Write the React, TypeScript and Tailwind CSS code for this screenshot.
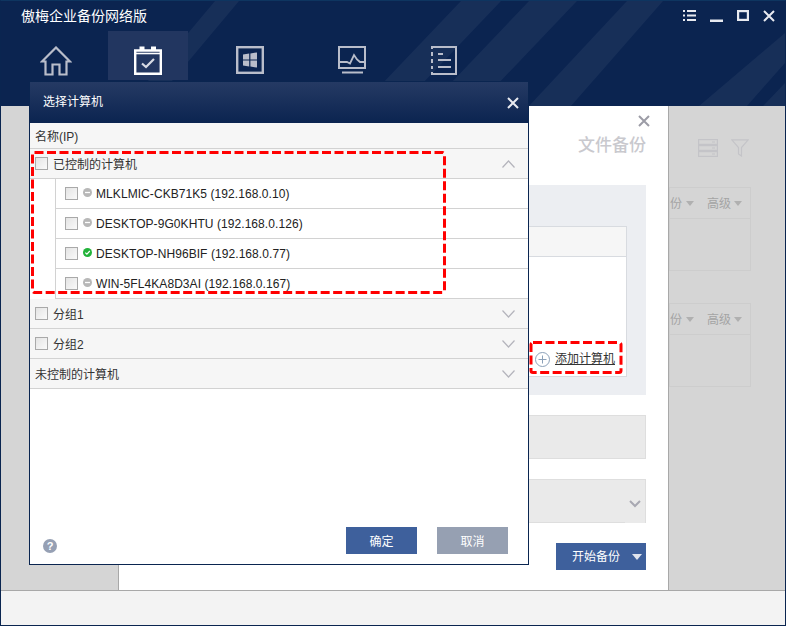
import React from 'react';

const navItems = ['home', 'backup', 'windows', 'monitor', 'notes'];

const computers = [
  { name: 'MLKLMIC-CKB71K5 (192.168.0.10)', online: false },
  { name: 'DESKTOP-9G0KHTU (192.168.0.126)', online: false },
  { name: 'DESKTOP-NH96BIF (192.168.0.77)', online: true },
  { name: 'WIN-5FL4KA8D3AI (192.168.0.167)', online: false },
];

function NavIcon({ name }: { name: string }) {
  if (name === 'home') {
    return (
      <svg width="32" height="30" viewBox="0 0 32 30" fill="none" stroke="#b9bdca" strokeWidth="2.2">
        <path d="M5.5 15.5H2L16 1.5L30 15.5H26.5V28.5H19.5V18.5H12.5V28.5H5.5Z" />
      </svg>
    );
  }
  if (name === 'backup') {
    return (
      <svg width="28" height="30" viewBox="0 0 28 30" fill="none">
        <path d="M1.2 4.5H26.8V27.8H1.2Z" stroke="#fff" strokeWidth="2.4" />
        <path d="M1 7.5H27" stroke="#fff" strokeWidth="1.6" />
        <path d="M5.5 0.5H10.5V4H5.5ZM17 0.5H22V4H17Z" fill="#fff" />
        <path d="M8 17.5L12 21L20 13" stroke="#d8dbe4" strokeWidth="2.2" />
      </svg>
    );
  }
  if (name === 'windows') {
    return (
      <svg width="28" height="28" viewBox="0 0 28 28" fill="none">
        <rect x="1.2" y="1.2" width="25.6" height="25.6" stroke="#b9bdca" strokeWidth="2.4" />
        <path d="M7 8.5L13.2 7.6V13.4H7ZM14.4 7.4L21 6.4V13.4H14.4ZM7 14.6H13.2V20.4L7 19.5ZM14.4 14.6H21V21.6L14.4 20.6Z" fill="#b9bdca" />
      </svg>
    );
  }
  if (name === 'monitor') {
    return (
      <svg width="28" height="28" viewBox="0 0 28 28" fill="none" stroke="#b9bdca">
        <rect x="1" y="1" width="26" height="21" strokeWidth="2" />
        <path d="M1 16H9L12 17.5L16 9L19 13.5L22 16H27" strokeWidth="1.8" />
        <path d="M4 26.5H25" strokeWidth="2" />
      </svg>
    );
  }
  return (
    <svg width="26" height="29" viewBox="0 0 26 29" fill="none" stroke="#b9bdca" strokeWidth="2">
      <path d="M1 3V1H25V28H1V26" />
      <path d="M1 6V10M1 13V17M1 20V23" />
      <path d="M7 8H12M7 14H20M7 21H20" />
    </svg>
  );
}

function CheckBox() {
  return <span className="block w-[13px] h-[13px] shrink-0 border border-[#a9a9a9] bg-gradient-to-br from-[#e4e4e4] to-[#fafafa]" />;
}

function Chevron({ up }: { up?: boolean }) {
  return (
    <svg width="13" height="8" viewBox="0 0 13 8" fill="none" stroke="#b4b4bc" strokeWidth="1.2" className="shrink-0">
      <path d={up ? 'M0.5 7.5L6.5 1L12.5 7.5' : 'M0.5 0.5L6.5 7L12.5 0.5'} />
    </svg>
  );
}

function GroupRow({ label, checkbox = true, up }: { label: string; checkbox?: boolean; up?: boolean }) {
  return (
    <div className="h-[30px] flex items-center border-b border-[#d2d2d2] bg-[#f6f6f6] pl-[5px] pr-[13px]">
      {checkbox && <CheckBox />}
      <span className={checkbox ? 'ml-[5px] pt-[2px] flex-1' : 'pt-[2px] flex-1'}>{label}</span>
      <Chevron up={up} />
    </div>
  );
}

function StatusDot({ online }: { online: boolean }) {
  if (online) {
    return (
      <svg width="9" height="9" viewBox="0 0 9 9" className="mb-[3px] ml-[5px] shrink-0">
        <circle cx="4.5" cy="4.5" r="4.5" fill="#22b33a" />
        <path d="M2.3 4.6L3.9 6.1L6.8 3" fill="none" stroke="#fff" strokeWidth="1.2" />
      </svg>
    );
  }
  return (
    <svg width="9" height="9" viewBox="0 0 9 9" className="mb-[3px] ml-[5px] shrink-0">
      <circle cx="4.5" cy="4.5" r="4.5" fill="#b8b8b8" />
      <path d="M2 4.5H7" stroke="#fff" strokeWidth="1.3" />
    </svg>
  );
}

function SideCard() {
  return (
    <div className="h-[84px] mr-[34px] border border-[#cdcdcd] overflow-hidden">
      <div className="h-[31px] border-b border-[#cdcdcd] flex items-center justify-end pt-[1px] pr-[8px] text-[12px] text-[#a4a4a4] whitespace-nowrap">
        <span className="shrink-0">份</span>
        <span className="shrink-0 ml-[4px] mr-[13px] w-0 h-0 border-x-[4px] border-x-transparent border-t-[5px] border-t-[#b0b0b0]" />
        <span className="shrink-0">高级</span>
        <span className="shrink-0 ml-[3px] w-0 h-0 border-x-[4px] border-x-transparent border-t-[5px] border-t-[#b0b0b0]" />
      </div>
    </div>
  );
}

export default function App() {
  return (
    <div className="relative w-[786px] h-[626px] flex flex-col overflow-hidden border border-[#0a2550] border-t-[#0e3560] text-[12px] text-[#333] font-['Liberation_Sans','Noto_Sans_CJK_SC',sans-serif]">
      <header className="relative h-[105px] shrink-0 bg-[#0b2450]">
        <svg className="absolute inset-0" width="784" height="105" viewBox="0 0 784 105">
          <g fill="#fff" fillOpacity="0.05">
            <polygon points="214,0 238,0 150,105 126,105" />
            <polygon points="460,0 500,0 400,105 360,105" />
            <polygon points="528,0 576,0 476,105 428,105" />
            <polygon points="626,0 662,0 570,105 528,105" />
            <polygon points="784,32 784,62 746,105 698,105" />
            <polygon points="784,82 784,105 762,105" />
          </g>
        </svg>
        <div className="relative pl-[20px] pt-[5px] h-[30px] text-[14px] leading-[20px] text-white">傲梅企业备份网络版</div>
        <div className="absolute right-[10px] top-[9px] flex items-start gap-[14px]">
          <svg width="13" height="11" viewBox="0 0 13 11" fill="#e8eaf0">
            <path d="M0 0H2V2H0ZM4 0H13V2H4ZM0 4.5H2V6.5H0ZM4 4.5H13V6.5H4ZM0 9H2V11H0ZM4 9H13V11H4Z" />
          </svg>
          <svg width="13" height="12" viewBox="0 0 13 12" fill="#e8eaf0">
            <path d="M0 9.5H13V12H0Z" />
          </svg>
          <svg width="12" height="11" viewBox="0 0 12 11" fill="none" stroke="#e8eaf0" strokeWidth="2.2">
            <rect x="1.1" y="1.1" width="9.8" height="8.8" />
          </svg>
          <svg width="12" height="12" viewBox="0 0 12 12" fill="none" stroke="#e8eaf0" strokeWidth="2">
            <path d="M1 1L11 11M11 1L1 11" />
          </svg>
        </div>
        <nav className="relative flex pl-[15px]">
          {navItems.map((item, i) => (
            <div
              key={item}
              className={
                'w-[80px] h-[49px] flex justify-center pt-[15px] ' +
                (item === 'backup' ? 'bg-[#223660] ml-[12px]' : i === 4 ? 'ml-[12px]' : i === 0 ? '' : 'ml-[22px]')
              }
            >
              <NavIcon name={item} />
            </div>
          ))}
        </nav>
      </header>

      <div className="flex-1 flex min-h-0">
        <div className="w-[118px] shrink-0 bg-[#d5d5d5] border-r border-[#a8a8a8]" />

        <main className="flex-1 flex flex-col bg-white pl-[22px] pr-[22px] pt-[9px]">
          <div className="flex justify-end -mr-[4px]">
            <svg width="12" height="12" viewBox="0 0 12 12" fill="none" stroke="#9c9ca6" strokeWidth="2">
              <path d="M1 1L11 11M11 1L1 11" />
            </svg>
          </div>
          <div className="mt-[7px] h-[24px] text-right text-[17px] leading-[24px] font-medium text-[#c9c9ce]">文件备份</div>
          <div className="mt-[27px] h-[210px] shrink-0 bg-[#eceef2] pt-[41px] pr-[19px]">
            <div className="h-[151px] ml-[60px] flex flex-col bg-white border border-[#d8dbe0]">
              <div className="h-[30px] shrink-0 bg-[#f6f6f6] border-b border-[#d8dbe0]" />
              <div className="flex-1 flex items-end justify-end pr-[11px] pb-[9px] gap-[5px]">
                <svg width="15" height="15" viewBox="0 0 15 15" fill="none" stroke="#8ba0b8" strokeWidth="1">
                  <circle cx="7.5" cy="7.5" r="7" />
                  <path d="M7.5 3.5V11.5M3.5 7.5H11.5" />
                </svg>
                <span className="underline leading-[16px]">添加计算机</span>
              </div>
            </div>
          </div>
          <div className="mt-[20px] h-[44px] shrink-0 bg-[#eaeaea] border border-[#dedede]" />
          <div className="relative mt-[20px] h-[44px] shrink-0 bg-[#eaeaea] border-x border-t border-[#dedede] flex items-center justify-end pr-[4px]">
            <svg width="12" height="8" viewBox="0 0 12 8" fill="none" stroke="#a8a8b2" strokeWidth="2" className="mt-[4px]">
              <path d="M1 1L6 6L11 1" />
            </svg>
            <div className="absolute left-0 bottom-0 right-[20px] h-px bg-[#dedede]" />
          </div>
          <div className="mt-[20px] flex justify-end">
            <div className="w-[90px] h-[27px] bg-[#3e609c] text-white flex items-center pl-[16px]">
              <span className="flex-1">开始备份</span>
              <span className="mr-[4px] w-0 h-0 border-x-[5px] border-x-transparent border-t-[6px] border-t-[#e0e4ee]" />
            </div>
          </div>
        </main>

        <aside className="w-[117px] shrink-0 bg-[#d5d5d5] border-l border-[#a8a8a8] flex flex-col overflow-hidden">
          <div className="flex justify-end gap-[13px] mr-[36px] mt-[33px] h-[18px]">
            <svg width="20" height="18" viewBox="0 0 20 18" fill="none" stroke="#c4c4c8" strokeWidth="1.2">
              <rect x="0.6" y="0.6" width="18.8" height="4.8" />
              <rect x="0.6" y="6.6" width="18.8" height="4.8" />
              <rect x="0.6" y="12.6" width="18.8" height="4.8" />
              <path d="M14 3H17M14 9H17M14 15H17" />
            </svg>
            <svg width="18" height="18" viewBox="0 0 18 18" fill="none" stroke="#c4c4c8" strokeWidth="1.2">
              <path d="M0.8 0.8H17.2L10.5 8.5V17L7.5 15V8.5Z" />
            </svg>
          </div>
          <div className="mt-[30px] flex flex-col gap-[32px]">
            <SideCard />
            <SideCard />
          </div>
        </aside>
      </div>

      <footer className="h-[35px] shrink-0 bg-[#f3f3f3] border-t border-[#a8a8a8]" />

      <div className="absolute left-[28px] top-[80px] w-[500px] h-[484px] flex flex-col bg-white border border-[#0a2550]">
        <div className="h-[41px] shrink-0 flex items-center justify-between pl-[13px] pr-[9px] text-white bg-gradient-to-b from-[#253a64] to-[#0b2450]">
          <span className="pb-[2px]">选择计算机</span>
          <svg width="12" height="12" viewBox="0 0 12 12" fill="none" stroke="#e8eaf0" strokeWidth="2">
            <path d="M1 1L11 11M11 1L1 11" />
          </svg>
        </div>
        <div className="h-[26px] shrink-0 flex items-center pl-[5px] pt-[2px] bg-[#f6f6f6] border-b border-[#d2d2d2]">名称(IP)</div>
        <GroupRow label="已控制的计算机" up />
        <div className="ml-[25px] border-l border-[#d2d2d2] text-[#222]">
          {computers.map((computer) => (
            <div key={computer.name} className="h-[30px] flex items-center pl-[9px] border-b border-[#d2d2d2]">
              <CheckBox />
              <StatusDot online={computer.online} />
              <span className="ml-[4px] tracking-[0.07px]">{computer.name}</span>
            </div>
          ))}
        </div>
        <GroupRow label="分组1" />
        <GroupRow label="分组2" />
        <GroupRow label="未控制的计算机" checkbox={false} />
        <div className="flex-1 flex items-end pl-[13px] pb-[10px] pr-[20px]">
          <span className="w-[14px] h-[14px] mb-[1px] rounded-full bg-[#96a0b4] text-white text-[11px] leading-[14px] font-bold text-center">?</span>
          <div className="ml-auto flex gap-[20px]">
            <div className="w-[71px] h-[27px] pt-[2px] flex items-center justify-center bg-[#3e609c] text-white">确定</div>
            <div className="w-[71px] h-[27px] pt-[2px] flex items-center justify-center bg-[#96a0b2] text-white">取消</div>
          </div>
        </div>
      </div>

      <svg className="absolute left-0 top-0 pointer-events-none" width="786" height="626" viewBox="0 0 786 626" fill="none" stroke="#ff0000" strokeWidth="3" strokeDasharray="9 3.5">
        <rect x="31.5" y="151.5" width="412" height="140" rx="2" />
        <rect x="530" y="341.5" width="90" height="30" rx="2" />
      </svg>
    </div>
  );
}
